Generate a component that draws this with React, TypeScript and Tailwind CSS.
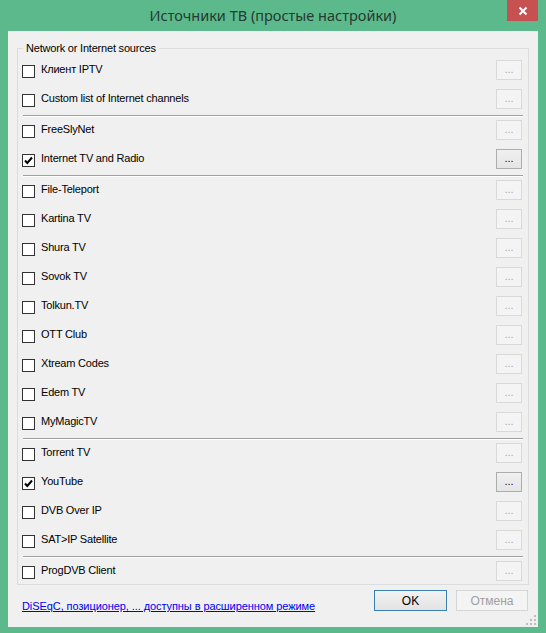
import React from "react";

type Row = { label: string; checked?: boolean; enabled?: boolean };

const groups: Row[][] = [
  [{ label: "Клиент IPTV" }, { label: "Custom list of Internet channels" }],
  [{ label: "FreeSlyNet" }, { label: "Internet TV and Radio", checked: true, enabled: true }],
  [
    { label: "File-Teleport" },
    { label: "Kartina TV" },
    { label: "Shura TV" },
    { label: "Sovok TV" },
    { label: "Tolkun.TV" },
    { label: "OTT Club" },
    { label: "Xtream Codes" },
    { label: "Edem TV" },
    { label: "MyMagicTV" },
  ],
  [
    { label: "Torrent TV" },
    { label: "YouTube", checked: true, enabled: true },
    { label: "DVB Over IP" },
    { label: "SAT>IP Satellite" },
  ],
  [{ label: "ProgDVB Client" }],
];

function CheckBox({ checked }: { checked?: boolean }) {
  return (
    <div className="w-[13px] h-[13px] border border-[#333333] bg-white flex items-center justify-center shrink-0">
      {checked && (
        <svg width="11" height="11" viewBox="0 0 11 11">
          <path d="M2 5.5 L4.3 8 L9 2.5" fill="none" stroke="#000" strokeWidth="2" />
        </svg>
      )}
    </div>
  );
}

function DotsButton({ enabled }: { enabled?: boolean }) {
  return (
    <div
      className={
        enabled
          ? "w-[26px] h-[20px] border border-[#adadad] bg-gradient-to-b from-[#f0f0f0] to-[#e5e5e5] flex items-end justify-center pb-[4px] text-[11px] leading-[11px] text-[#1a0016]"
          : "w-[26px] h-[20px] border border-[#d9d9d9] bg-[#f4f4f4] flex items-end justify-center pb-[4px] text-[11px] leading-[11px] text-[#a8a8a8]"
      }
    >
      ...
    </div>
  );
}

function RowItem({ row, last }: { row: Row; last?: boolean }) {
  return (
    <div className={(last ? "h-[25px]" : "h-[29px]") + " shrink-0 flex items-start pl-[4px] pr-[6px]"}>
      <div className="mt-[8px]">
        <CheckBox checked={row.checked} />
      </div>
      <span className="mt-[6px] ml-[6px] text-[11px] leading-[13px] text-black tracking-[-0.2px]">
        {row.label}
      </span>
      <div className="ml-auto mt-[3px]">
        <DotsButton enabled={row.enabled} />
      </div>
    </div>
  );
}

export default function App() {
  return (
    <div
      className="w-[546px] h-[633px] bg-[#5bb98b] flex flex-col overflow-hidden"
      style={{ fontFamily: '"Liberation Sans", Arial, sans-serif' }}
    >
      <div className="relative h-[31px] shrink-0 flex items-center justify-center">
        <span
          className="text-[14.5px] text-[#263a30] leading-[18px] -mt-[1px]"
          style={{ fontFamily: '"Noto Sans", "Open Sans", sans-serif' }}
        >
          Источники ТВ (простые настройки)
        </span>
        <div className="absolute right-[8px] top-0 w-[31px] h-[21px] bg-[#c75050] flex items-center justify-center">
          <svg width="10" height="10" viewBox="0 0 10 10">
            <path d="M1.5 1.5 L8.5 8.5 M8.5 1.5 L1.5 8.5" stroke="#fff" strokeWidth="2" />
          </svg>
        </div>
      </div>
      <div className="mx-[8px] w-[530px] h-[596px] bg-[#f0f0f0] flex flex-col pt-[10px]">
        <fieldset className="mx-[9px] w-[512px] border border-[#dcdcdc] px-0 pb-0 h-[544px] overflow-hidden">
          <legend className="ml-[5px] px-[3px] text-[11px] leading-[14px] text-black tracking-[-0.2px]">
            Network or Internet sources
          </legend>
          <div className="flex flex-col pt-[2px]">
            {groups.map((g, gi) => (
              <div key={gi} className="flex flex-col">
                {gi > 0 && (
                  <div className="mx-[5px] h-[2px] shrink-0 border-t border-t-[#a0a0a0] border-b border-b-[#ffffff]" />
                )}
                {g.map((r, ri) => (
                  <RowItem key={ri} row={r} last={gi === groups.length - 1} />
                ))}
              </div>
            ))}
          </div>
        </fieldset>
        <div className="flex items-start justify-between mt-[5px] pl-[14px] pr-[10px]">
          <span className="mt-[10px] text-[11px] leading-[13px] text-[#0000ee] underline tracking-[-0.08px] whitespace-nowrap">
            DiSEqC, позиционер, ... доступны в расширенном режиме
          </span>
          <div className="flex gap-[9px]">
            <div className="w-[73px] h-[21px] border border-[#3c7fb1] bg-gradient-to-b from-[#f2f2f2] to-[#e3e3e3] flex items-center justify-center text-[12px] text-black">
              OK
            </div>
            <div className="w-[72px] h-[21px] border border-[#d5d5d5] bg-[#f4f4f4] flex items-center justify-center text-[12px] text-[#a0a0a0]">
              Отмена
            </div>
          </div>
        </div>
        <div className="mt-auto self-end mr-[2px] mb-[2px]">
          <svg width="10" height="10" viewBox="0 0 10 10">
            <rect x="8" y="0" width="2" height="2" fill="#bdbdbd" />
            <rect x="4" y="4" width="2" height="2" fill="#bdbdbd" />
            <rect x="8" y="4" width="2" height="2" fill="#bdbdbd" />
            <rect x="0" y="8" width="2" height="2" fill="#bdbdbd" />
            <rect x="4" y="8" width="2" height="2" fill="#bdbdbd" />
            <rect x="8" y="8" width="2" height="2" fill="#bdbdbd" />
          </svg>
        </div>
      </div>
    </div>
  );
}
